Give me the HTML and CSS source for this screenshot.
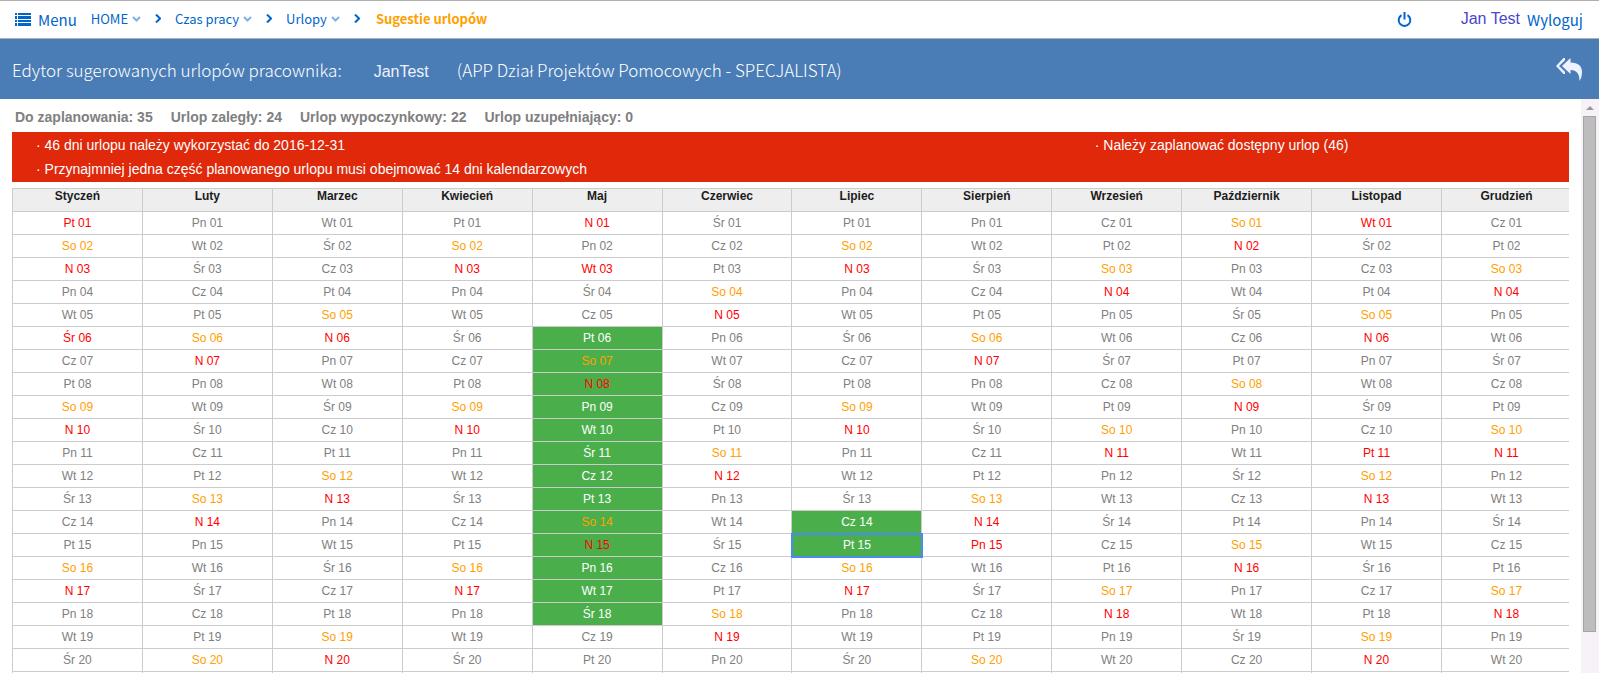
FILE: index.html
```
<!DOCTYPE html>
<html lang="pl">
<head>
<meta charset="utf-8">
<title>Sugestie urlopów</title>
<link rel="stylesheet" href="styles.css">
</head>
<body>
<header class="topbar">
  <button type="button" class="menu-button">
    <svg class="menu-icon" viewBox="0 0 16 13" width="16" height="13" shape-rendering="crispEdges" aria-hidden="true"><path d="M0 0h2v2H0zM3 0h13v2H3zM0 3h2v3H0zM3 3h13v3H3zM0 7h2v2H0zM3 7h13v2H3zM0 10h2v3H0zM3 10h13v3H3z"/></svg>
    Menu
  </button>
  <nav class="breadcrumbs" aria-label="Ścieżka">
    <a href="#" class="crumb">HOME <svg class="caret" viewBox="0 0 9 6" width="9" height="6" aria-hidden="true"><path d="M1 1l3.500 3.500L8 1"/></svg></a>
    <svg class="separator" viewBox="0 0 6 9" width="6" height="9" aria-hidden="true"><path d="M1 .5l4 4-4 4"/></svg>
    <a href="#" class="crumb">Czas pracy <svg class="caret" viewBox="0 0 9 6" width="9" height="6" aria-hidden="true"><path d="M1 1l3.500 3.500L8 1"/></svg></a>
    <svg class="separator" viewBox="0 0 6 9" width="6" height="9" aria-hidden="true"><path d="M1 .5l4 4-4 4"/></svg>
    <a href="#" class="crumb">Urlopy <svg class="caret" viewBox="0 0 9 6" width="9" height="6" aria-hidden="true"><path d="M1 1l3.500 3.500L8 1"/></svg></a>
    <svg class="separator" viewBox="0 0 6 9" width="6" height="9" aria-hidden="true"><path d="M1 .5l4 4-4 4"/></svg>
    <span class="current">Sugestie urlopów</span>
  </nav>
  <div class="account">
    <button type="button" class="power" aria-label="Wyłącz">
      <svg viewBox="0 0 15 15" width="15" height="15" aria-hidden="true"><path d="M4.500 3.200a5.800 5.800 0 1 0 6 0M7.500 0v7.500"/></svg>
    </button>
    <span class="user">Jan Test</span>
    <a href="#" class="logout">Wyloguj</a>
  </div>
</header>
<section class="titlebar">
  <h1 class="title">Edytor sugerowanych urlopów pracownika:</h1>
  <span class="employee">JanTest</span>
  <span class="unit">(APP Dział Projektów Pomocowych - SPECJALISTA)</span>
  <button type="button" class="back" aria-label="Powrót">
    <svg viewBox="0 0 26 23" width="26" height="23" aria-hidden="true"><path d="M14.500 0v4.500C22 4.500 26 8 26 14c0 3.500-.8 6.500-2.500 9C23.500 16 21 12 14.500 12v4L6 8z"/><path d="M7.500 0H9v2.200L3 8l6 5.800V16H7.500L0 8z"/></svg>
  </button>
</section>
<div class="workspace">
  <main class="content">
    <div class="stats">
      <span>Do zaplanowania: 35</span>
      <span>Urlop zaległy: 24</span>
      <span>Urlop wypoczynkowy: 22</span>
      <span>Urlop uzupełniający: 0</span>
    </div>
    <div class="alert">
      <div><p>· 46 dni urlopu należy wykorzystać do 2016-12-31</p>
      <p>· Przynajmniej jedna część planowanego urlopu musi obejmować 14 dni kalendarzowych</p></div>
      <div><p>· Należy zaplanować dostępny urlop (46)</p></div>
    </div>
    <div class="calendar-wrap">
      <table class="calendar">
        <thead><tr><th>Styczeń</th><th>Luty</th><th>Marzec</th><th>Kwiecień</th><th>Maj</th><th>Czerwiec</th><th>Lipiec</th><th>Sierpień</th><th>Wrzesień</th><th>Październik</th><th>Listopad</th><th>Grudzień</th></tr></thead>
        <tbody id="days"></tbody>
      </table>
    </div>
  </main>
  <div class="scrollbar" aria-hidden="true">
    <svg class="arrow" viewBox="0 0 8 4" width="8" height="4"><path d="M4 0l4 4H0z"/></svg>
    <div class="thumb"></div>
  </div>
</div>
<script src="calendar.js"></script>
</body>
</html>
```
FILE: styles.css
```
* { box-sizing: border-box; }
body {
  margin: 0;
  height: 100vh;
  overflow: hidden;
  display: flex;
  flex-direction: column;
  background: #fff;
  font-family: "Liberation Sans", Arial, sans-serif;
}
button { border: 0; padding: 0; background: none; cursor: pointer; }
a { text-decoration: none; }
.topbar {
  flex: none;
  display: flex;
  align-items: center;
  height: 39px;
  padding: 0 16px 0 15px;
  border-top: 1px solid #b0b0b0;
  border-bottom: 1px solid #b0b0b0;
  color: #06c;
  font-family: "Noto Sans CJK SC", "Noto Sans", sans-serif;
  font-size: 13px;
}
.menu-button {
  display: flex;
  align-items: center;
  gap: 7px;
  color: #06c;
  font: 400 15px "Noto Sans CJK SC", "Noto Sans", sans-serif;
}
.menu-icon { fill: #06c; }
.breadcrumbs { display: flex; align-items: center; gap: 14px; margin-left: 14px; padding-bottom: 2px; }
.crumb { display: flex; align-items: center; gap: 4px; color: #06c; }
.caret { fill: none; stroke: #7fb2e5; stroke-width: 2; }
.separator { fill: none; stroke: #06c; stroke-width: 2; }
.current { margin-left: 2px; color: #ffa000; font-weight: 700; }
.account { display: flex; align-items: center; margin-left: auto; }
.power { display: flex; margin-right: 49px; }
.power svg { fill: none; stroke: #06c; stroke-width: 2; }
.user { margin-right: 7px; padding-bottom: 2px; color: #4b45cc; font: 16px "Liberation Sans", Arial, sans-serif; }
.logout { color: #06c; font-size: 15px; }
.titlebar {
  flex: none;
  display: flex;
  align-items: center;
  height: 60px;
  padding: 0 17px 0 12px;
  background: #4a7db6;
  color: #fff;
}
.title, .unit { margin: 0; font: 300 17px "Noto Sans CJK SC", "Open Sans", sans-serif; }
.employee { margin: 6px 28px 0 32px; font-size: 16px; color: #eef2ff; }
.back { display: flex; margin-left: auto; }
.back svg { fill: #eef2ff; }
.workspace { flex: 1; min-height: 0; display: flex; }
.content { flex: 1; min-width: 0; overflow: hidden; padding: 10px 12px 0; }
.stats {
  display: flex;
  gap: 18px;
  padding: 0 3px 7px;
  color: #808080;
  font-size: 14px;
  font-weight: 700;
  line-height: 16px;
}
.alert {
  display: grid;
  grid-template-columns: 68fr 32fr;
  padding: 1px 0;
  background: #e0280a;
  color: #fff;
  font-size: 14px;
  line-height: 24px;
}
.alert div { padding-left: 24px; }
.alert p { margin: 0; }
.calendar-wrap { overflow: hidden; margin-top: 6px; }
.calendar {
  width: calc(100% + 3px);
  table-layout: fixed;
  border-collapse: collapse;
  text-align: center;
  font-size: 12px;
}
.calendar th, .calendar td { border: 1px solid #ccc; padding: 0; height: 23px; line-height: 22px; }
.calendar th {
  padding-bottom: 7px;
  background: #eee;
  color: #1c1c1c;
  font-size: 12px;
  line-height: 15px;
}
.calendar td { color: #808080; }
.calendar td.planned { background: #4aaf4a; color: #fff; }
.calendar td.saturday { color: #ffa000; }
.calendar td.free { color: #f00; }
.calendar td.focused { outline: 2px solid #4a8af5; outline-offset: -1px; }
.scrollbar {
  flex: none;
  display: flex;
  flex-direction: column;
  align-items: center;
  width: 18px;
  padding: 7px 3px 0 2px;
  background: #f7f2f7;
}
.arrow { flex: none; fill: #999; margin-bottom: 6px; }
.thumb { width: 100%; height: 91%; border: 1px solid #a5a5a5; background: #bdbdbd; }
```
FILE: calendar.js
```
const year = 2016;
const lastDay = 20;
const names = ["N", "Pn", "Wt", "Śr", "Cz", "Pt", "So"];
const holidays = ["1-1", "1-6", "5-1", "5-3", "8-15", "11-1", "11-11"];
const planned = (month, day) =>
  (month === 5 && day >= 6 && day <= 18) || (month === 7 && (day === 14 || day === 15));

const body = document.getElementById("days");
for (let day = 1; day <= lastDay + 1; day++) {
  const row = body.insertRow();
  for (let month = 1; month <= 12; month++) {
    const cell = row.insertCell();
    if (day > lastDay) continue;
    const weekday = new Date(year, month - 1, day).getDay();
    cell.textContent = names[weekday] + " " + String(day).padStart(2, "0");
    if (weekday === 6) cell.classList.add("saturday");
    if (weekday === 0 || holidays.includes(month + "-" + day)) cell.classList.add("free");
    if (planned(month, day)) cell.classList.add("planned");
    if (month === 7 && day === 15) cell.classList.add("focused");
  }
}
```
